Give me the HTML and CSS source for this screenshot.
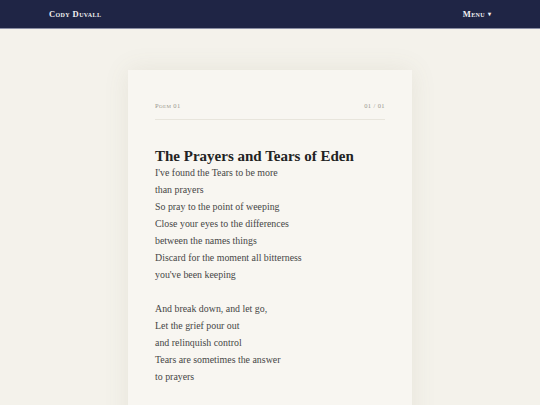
FILE: index.html
```html
<!DOCTYPE html>
<html lang="en">
<head>
    <meta charset="UTF-8">
    <meta name="viewport" content="width=device-width, initial-scale=1.0">
    <title>Cody Duvall - The Prayers and Tears of Eden</title>
    <link rel="stylesheet" href="styles.css">
</head>
<body>
    <!-- Top bar -->
    <header class="topbar">
        <a href="#" class="brand">Cody Duvall</a>
        <a href="#" class="menu">Menu <span class="caret">&#9662;</span></a>
    </header>

    <main class="page">
        <article class="poem-card">
            <div class="poem-meta">
                <span>Poem 01</span>
                <span>01 / 01</span>
            </div>

            <h1 class="poem-title">The Prayers and Tears of Eden</h1>

            <div class="stanza">
                <p>I've found the Tears to be more</p>
                <p>than prayers</p>
                <p>So pray to the point of weeping</p>
                <p>Close your eyes to the differences</p>
                <p>between the names things</p>
                <p>Discard for the moment all bitterness</p>
                <p>you've been keeping</p>
            </div>

            <div class="stanza">
                <p>And break down, and let go,</p>
                <p>Let the grief pour out</p>
                <p>and relinquish control</p>
                <p>Tears are sometimes the answer</p>
                <p>to prayers</p>
            </div>
        </article>
    </main>
</body>
</html>
```

FILE: styles.css
```css
body {
    margin: 0;
    padding: 0;
    font-family: "Liberation Serif", "Times New Roman", serif;
    background-color: #f4f2eb;
    color: #3b3b3b;
    height: 100vh;
    overflow: hidden;
}

/* Top bar */
.topbar {
    height: 28px;
    background-color: #1f2545;
    border-bottom: 1px solid #8a8ea3;
    display: flex;
    justify-content: space-between;
    align-items: center;
    padding: 0 49px 0 49px;
}

.topbar a {
    color: #f1f1f1;
    text-decoration: none;
    font-variant: small-caps;
    font-weight: bold;
    font-size: 8.5px;
    letter-spacing: 0.4px;
}

.menu .caret {
    font-size: 6px;
    vertical-align: 1px;
}

.page {
    display: flex;
    justify-content: center;
    padding-top: 41px;
}

/* Poem card */
.poem-card {
    width: 230px;
    min-height: 400px;
    padding: 27px 27px 40px;
    background-color: #f8f6f1;
    box-shadow: 0 0 24px rgba(120, 110, 80, 0.1);
}

.poem-meta {
    display: flex;
    justify-content: space-between;
    font-size: 6.5px;
    font-variant: small-caps;
    letter-spacing: 0.4px;
    color: #9a9890;
    padding: 5px 0 10px;
    border-bottom: 1px solid #e8e5dc;
}

.poem-title {
    font-size: 15px;
    font-weight: bold;
    color: #232323;
    margin: 29px 0 0;
    line-height: 15px;
}

.stanza {
    margin-bottom: 17px;
}

.stanza p {
    margin: 0;
    font-size: 9.9px;
    line-height: 17px;
    color: #464646;
}
```
